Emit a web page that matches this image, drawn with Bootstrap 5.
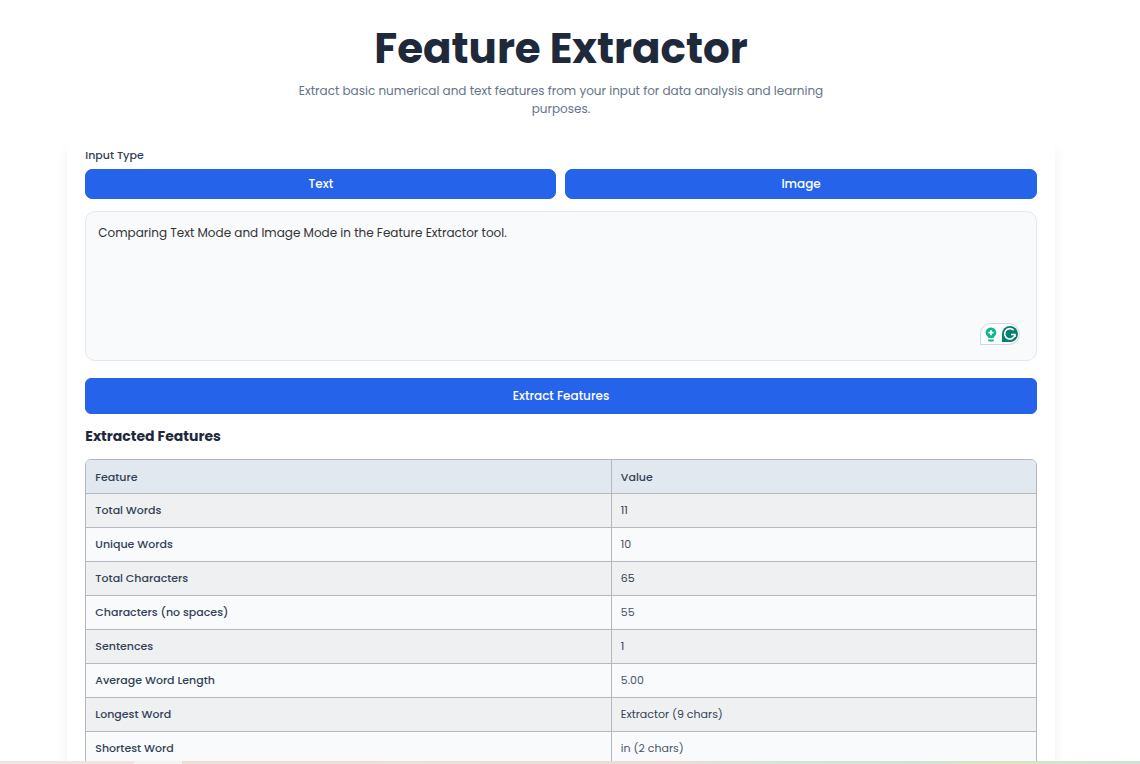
<!DOCTYPE html>
<html lang="en">
<head>
<meta charset="utf-8">
<meta name="viewport" content="width=device-width, initial-scale=1">
<title>Feature Extractor</title>
<link href="https://cdn.jsdelivr.net/npm/bootstrap@5.3.0/dist/css/bootstrap.min.css" rel="stylesheet">
<script src="https://cdn.jsdelivr.net/npm/bootstrap@5.3.0/dist/js/bootstrap.bundle.min.js" defer></script>
<style>
body { font-family: Poppins, Inter, sans-serif; font-size: 12px; line-height: 18px; color: #334155; background: #fff; }
.page-scroll { padding: 24px 18px 0 0; min-height: 0; }
.page-title { font-size: 42px; line-height: 50px; font-weight: 700; color: #1e293b; margin-bottom: 8px; }
.intro { font-size: 12px; max-width: 540px; color: #64748b; margin-bottom: 18px; }
.tool-card { width: 88%; padding: 10px 18px 18px; border-radius: 12px; box-shadow: 0 10px 14px rgba(0,0,0,.06); }
.field-label { font-size: 11px; font-weight: 500; margin-bottom: 5px; }
.mode-row { gap: 9px; margin-bottom: 12px; }
.btn-blue { --bs-btn-color: #fff; --bs-btn-bg: #2563eb; --bs-btn-border-color: #2563eb; --bs-btn-hover-color: #fff; --bs-btn-hover-bg: #1d4ed8; --bs-btn-font-size: 12px; --bs-btn-font-weight: 500; --bs-btn-line-height: 18px; --bs-btn-padding-y: 5px; --bs-btn-border-radius: 7px; }
.btn-run { --bs-btn-padding-y: 8px; --bs-btn-border-radius: 6px; margin-bottom: 12px; }
.text-wrap-box { margin-bottom: 17px; }
.source-text { height: 150px; resize: none; padding: 12px; font-size: 12px; line-height: 18px; color: #333; background: #f8fafc; border: 1px solid #e2e8f0; border-radius: 10px; }
.assistant { right: 16px; bottom: 15px; width: 42px; height: 24px; }
.result-title { font-size: 14px; line-height: 20px; font-weight: 700; color: #1e293b; margin-bottom: 13px; }
.result-frame { border: 1px solid #b4b8bd; border-radius: 6px; }
.result-table { --bs-table-bg: #f8fafc; --bs-table-color: #334155; --bs-table-striped-bg: #eff0f2; --bs-table-striped-color: #334155; font-size: 11px; table-layout: fixed; }
.result-table > :not(caption) > * > * { height: 34px; padding: 7px 9px 8px; border: 0; border-bottom: 1px solid #b4b8bd; font-weight: 500; line-height: 18px; }
.result-table > :not(caption) > * > :first-child { width: 55.3%; border-right: 1px solid #b4b8bd; }
.result-table > thead > tr > th { height: 33px; padding: 7px 9px; background: #e2e8f0; }
.result-table > tbody > tr > td { font-weight: 400; color: #475569; }
.bottom-strip { height: 3px; background: linear-gradient(90deg, #efe5e2 0 134px, #f6f4f3 134px 182px, #ecdfd5 182px 30%, #ecdcd4 57%, #d7e4d5 68%, #d2e2d1 80%, #dce3c2 88%, #cde2d6); }
</style>
</head>
<body class="vh-100 d-flex flex-column overflow-hidden">
<main class="page-scroll flex-fill overflow-hidden">
  <header class="text-center">
    <h1 class="page-title">Feature Extractor</h1>
    <p class="intro mx-auto">Extract basic numerical and text features from your input for data analysis and learning purposes.</p>
  </header>
  <section class="tool-card bg-white mx-auto">
    <label class="field-label d-block" for="source">Input Type</label>
    <div class="mode-row d-flex">
      <button class="btn btn-blue flex-fill w-50" type="button">Text</button>
      <button class="btn btn-blue flex-fill w-50" type="button">Image</button>
    </div>
    <div class="text-wrap-box position-relative">
      <textarea id="source" class="source-text form-control" spellcheck="false">Comparing Text Mode and Image Mode in the Feature Extractor tool.</textarea>
      <svg class="assistant position-absolute" viewBox="0 0 42 24" aria-hidden="true">
        <path d="M1.500 22.500V12A10.500 10.500 0 0 1 12 1.500H30A10.500 10.500 0 0 1 30 22.500Z" fill="#fff" stroke="#d3d7e2"/>
        <path d="M9 15C4.500 11.500 7 5.500 12 5.500s7.500 6 3 9.500l-.5 1h-5zM9 17.500h6v.500q0 1.500-1.500 1.500h-3Q9 19.500 9 18z" fill="#12b58e"/>
        <path d="M12 8.200v5M9.500 10.700h5" fill="none" stroke="#fff" stroke-width="1.800"/>
        <path d="M23 20V12a8 8 0 1 1 8 8z" fill="#05806d"/>
        <path d="M34.700 8.300A5.200 5.200 0 1 0 36 12.500H32M36 12.500V15" fill="none" stroke="#fff" stroke-width="1.600"/>
      </svg>
    </div>
    <button class="btn btn-blue btn-run w-100 d-block" type="button">Extract Features</button>
    <h2 class="result-title">Extracted Features</h2>
    <div class="result-frame overflow-hidden">
      <table class="table table-striped result-table mb-0">
        <thead><tr><th scope="col">Feature</th><th scope="col">Value</th></tr></thead>
        <tbody>
          <tr><th scope="row">Total Words</th><td>11</td></tr>
          <tr><th scope="row">Unique Words</th><td>10</td></tr>
          <tr><th scope="row">Total Characters</th><td>65</td></tr>
          <tr><th scope="row">Characters (no spaces)</th><td>55</td></tr>
          <tr><th scope="row">Sentences</th><td>1</td></tr>
          <tr><th scope="row">Average Word Length</th><td>5.00</td></tr>
          <tr><th scope="row">Longest Word</th><td>Extractor (9 chars)</td></tr>
          <tr><th scope="row">Shortest Word</th><td>in (2 chars)</td></tr>
        </tbody>
      </table>
    </div>
  </section>
</main>
<div class="bottom-strip flex-shrink-0"></div>
</body>
</html>
